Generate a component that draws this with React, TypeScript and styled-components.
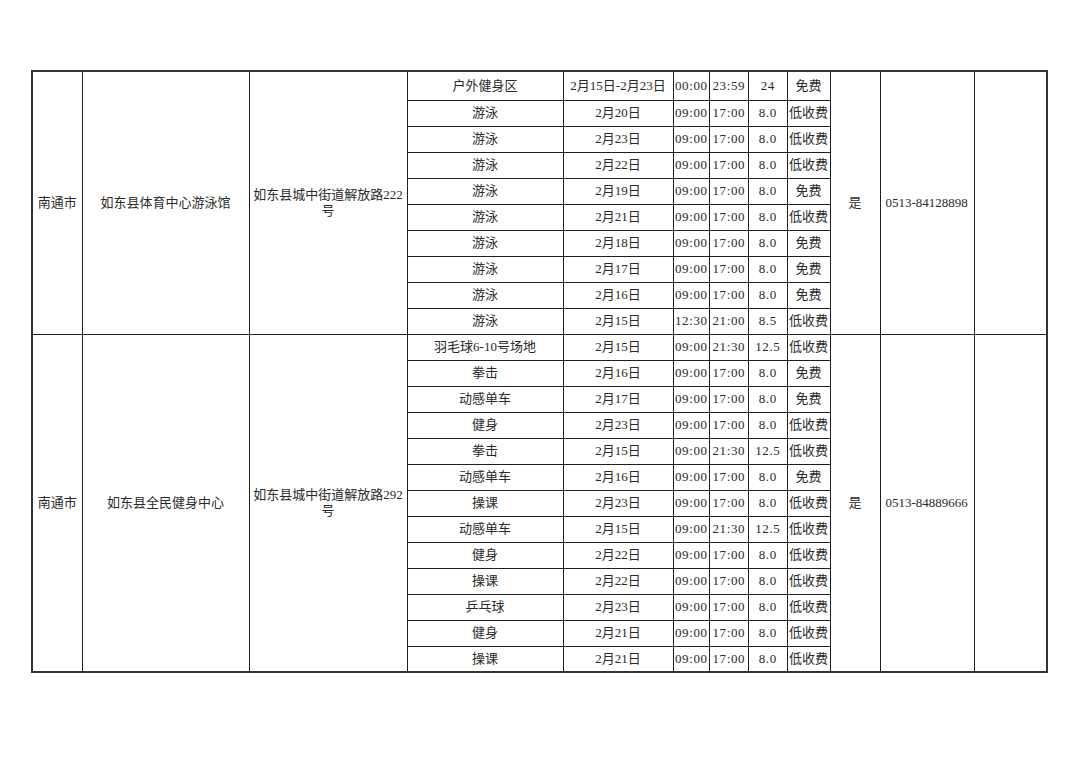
import React from "react";
import styled, { createGlobalStyle } from "styled-components";

const GlobalStyle = createGlobalStyle`
  html, body {
    margin: 0;
    padding: 0;
    background: #ffffff;
  }
`;

type Session = {
  item: string;
  date: string;
  start: string;
  end: string;
  hours: string;
  fee: string;
};

type Venue = {
  city: string;
  name: string;
  address: string;
  addressTail: string;
  open: string;
  phone: string;
  sessions: Session[];
};

const s = (
  item: string,
  date: string,
  start: string,
  end: string,
  hours: string,
  fee: string
): Session => ({ item, date, start, end, hours, fee });

const venues: Venue[] = [
  {
    city: "南通市",
    name: "如东县体育中心游泳馆",
    address: "如东县城中街道解放路222",
    addressTail: "号",
    open: "是",
    phone: "0513-84128898",
    sessions: [
      s("户外健身区", "2月15日-2月23日", "00:00", "23:59", "24", "免费"),
      s("游泳", "2月20日", "09:00", "17:00", "8.0", "低收费"),
      s("游泳", "2月23日", "09:00", "17:00", "8.0", "低收费"),
      s("游泳", "2月22日", "09:00", "17:00", "8.0", "低收费"),
      s("游泳", "2月19日", "09:00", "17:00", "8.0", "免费"),
      s("游泳", "2月21日", "09:00", "17:00", "8.0", "低收费"),
      s("游泳", "2月18日", "09:00", "17:00", "8.0", "免费"),
      s("游泳", "2月17日", "09:00", "17:00", "8.0", "免费"),
      s("游泳", "2月16日", "09:00", "17:00", "8.0", "免费"),
      s("游泳", "2月15日", "12:30", "21:00", "8.5", "低收费"),
    ],
  },
  {
    city: "南通市",
    name: "如东县全民健身中心",
    address: "如东县城中街道解放路292",
    addressTail: "号",
    open: "是",
    phone: "0513-84889666",
    sessions: [
      s("羽毛球6-10号场地", "2月15日", "09:00", "21:30", "12.5", "低收费"),
      s("拳击", "2月16日", "09:00", "17:00", "8.0", "免费"),
      s("动感单车", "2月17日", "09:00", "17:00", "8.0", "免费"),
      s("健身", "2月23日", "09:00", "17:00", "8.0", "低收费"),
      s("拳击", "2月15日", "09:00", "21:30", "12.5", "低收费"),
      s("动感单车", "2月16日", "09:00", "17:00", "8.0", "免费"),
      s("操课", "2月23日", "09:00", "17:00", "8.0", "低收费"),
      s("动感单车", "2月15日", "09:00", "21:30", "12.5", "低收费"),
      s("健身", "2月22日", "09:00", "17:00", "8.0", "低收费"),
      s("操课", "2月22日", "09:00", "17:00", "8.0", "低收费"),
      s("乒乓球", "2月23日", "09:00", "17:00", "8.0", "低收费"),
      s("健身", "2月21日", "09:00", "17:00", "8.0", "低收费"),
      s("操课", "2月21日", "09:00", "17:00", "8.0", "低收费"),
    ],
  },
];

const columns = [50, 167, 158, 156, 110, 36, 39, 39, 43, 50, 94, 73];

const Page = styled.div`
  padding: 70px 0 0 31px;
`;

const Sheet = styled.table`
  border-collapse: collapse;
  table-layout: fixed;
  width: 1015px;
  border: 2px solid #333333;
  font-family: "Liberation Serif", "Noto Sans CJK SC", serif;
  font-size: 13px;
  color: #2a2a2a;
`;

const Row = styled.tr<{ $tall?: boolean }>`
  height: ${(p) => (p.$tall ? 29 : 26)}px;
`;

const Cell = styled.td<{ $align?: "left" | "center"; $num?: boolean }>`
  border: 1px solid #1e1e1e;
  padding: 0 ${(p) => (p.$align === "left" ? "5px" : "1px")};
  text-align: ${(p) => p.$align ?? "center"};
  vertical-align: middle;
  white-space: nowrap;
  line-height: 16px;
  overflow: hidden;
`;

const NumCell = styled(Cell)`
  padding: 0 0 0 0.6px;
  letter-spacing: 0.6px;
`;

const WrapCell = styled(Cell)`
  white-space: normal;
`;

const App = () => (
  <Page>
    <GlobalStyle />
    <Sheet>
      <colgroup>
        {columns.map((w, i) => (
          <col key={i} style={{ width: w }} />
        ))}
      </colgroup>
      <tbody>
        {venues.map((v, vi) =>
          v.sessions.map((row, ri) => (
            <Row key={`${vi}-${ri}`} $tall={vi === 0 && ri === 0}>
              {ri === 0 && (
                <>
                  <Cell rowSpan={v.sessions.length}>{v.city}</Cell>
                  <Cell rowSpan={v.sessions.length}>{v.name}</Cell>
                  <WrapCell rowSpan={v.sessions.length}>
                    {v.address}
                    <br />
                    {v.addressTail}
                  </WrapCell>
                </>
              )}
              <Cell>{row.item}</Cell>
              <Cell>{row.date}</Cell>
              <NumCell>{row.start}</NumCell>
              <NumCell>{row.end}</NumCell>
              <NumCell>{row.hours}</NumCell>
              <Cell>{row.fee}</Cell>
              {ri === 0 && (
                <>
                  <Cell rowSpan={v.sessions.length}>{v.open}</Cell>
                  <Cell rowSpan={v.sessions.length} $align="left">
                    {v.phone}
                  </Cell>
                  <Cell rowSpan={v.sessions.length} />
                </>
              )}
            </Row>
          ))
        )}
      </tbody>
    </Sheet>
  </Page>
);

export default App;
